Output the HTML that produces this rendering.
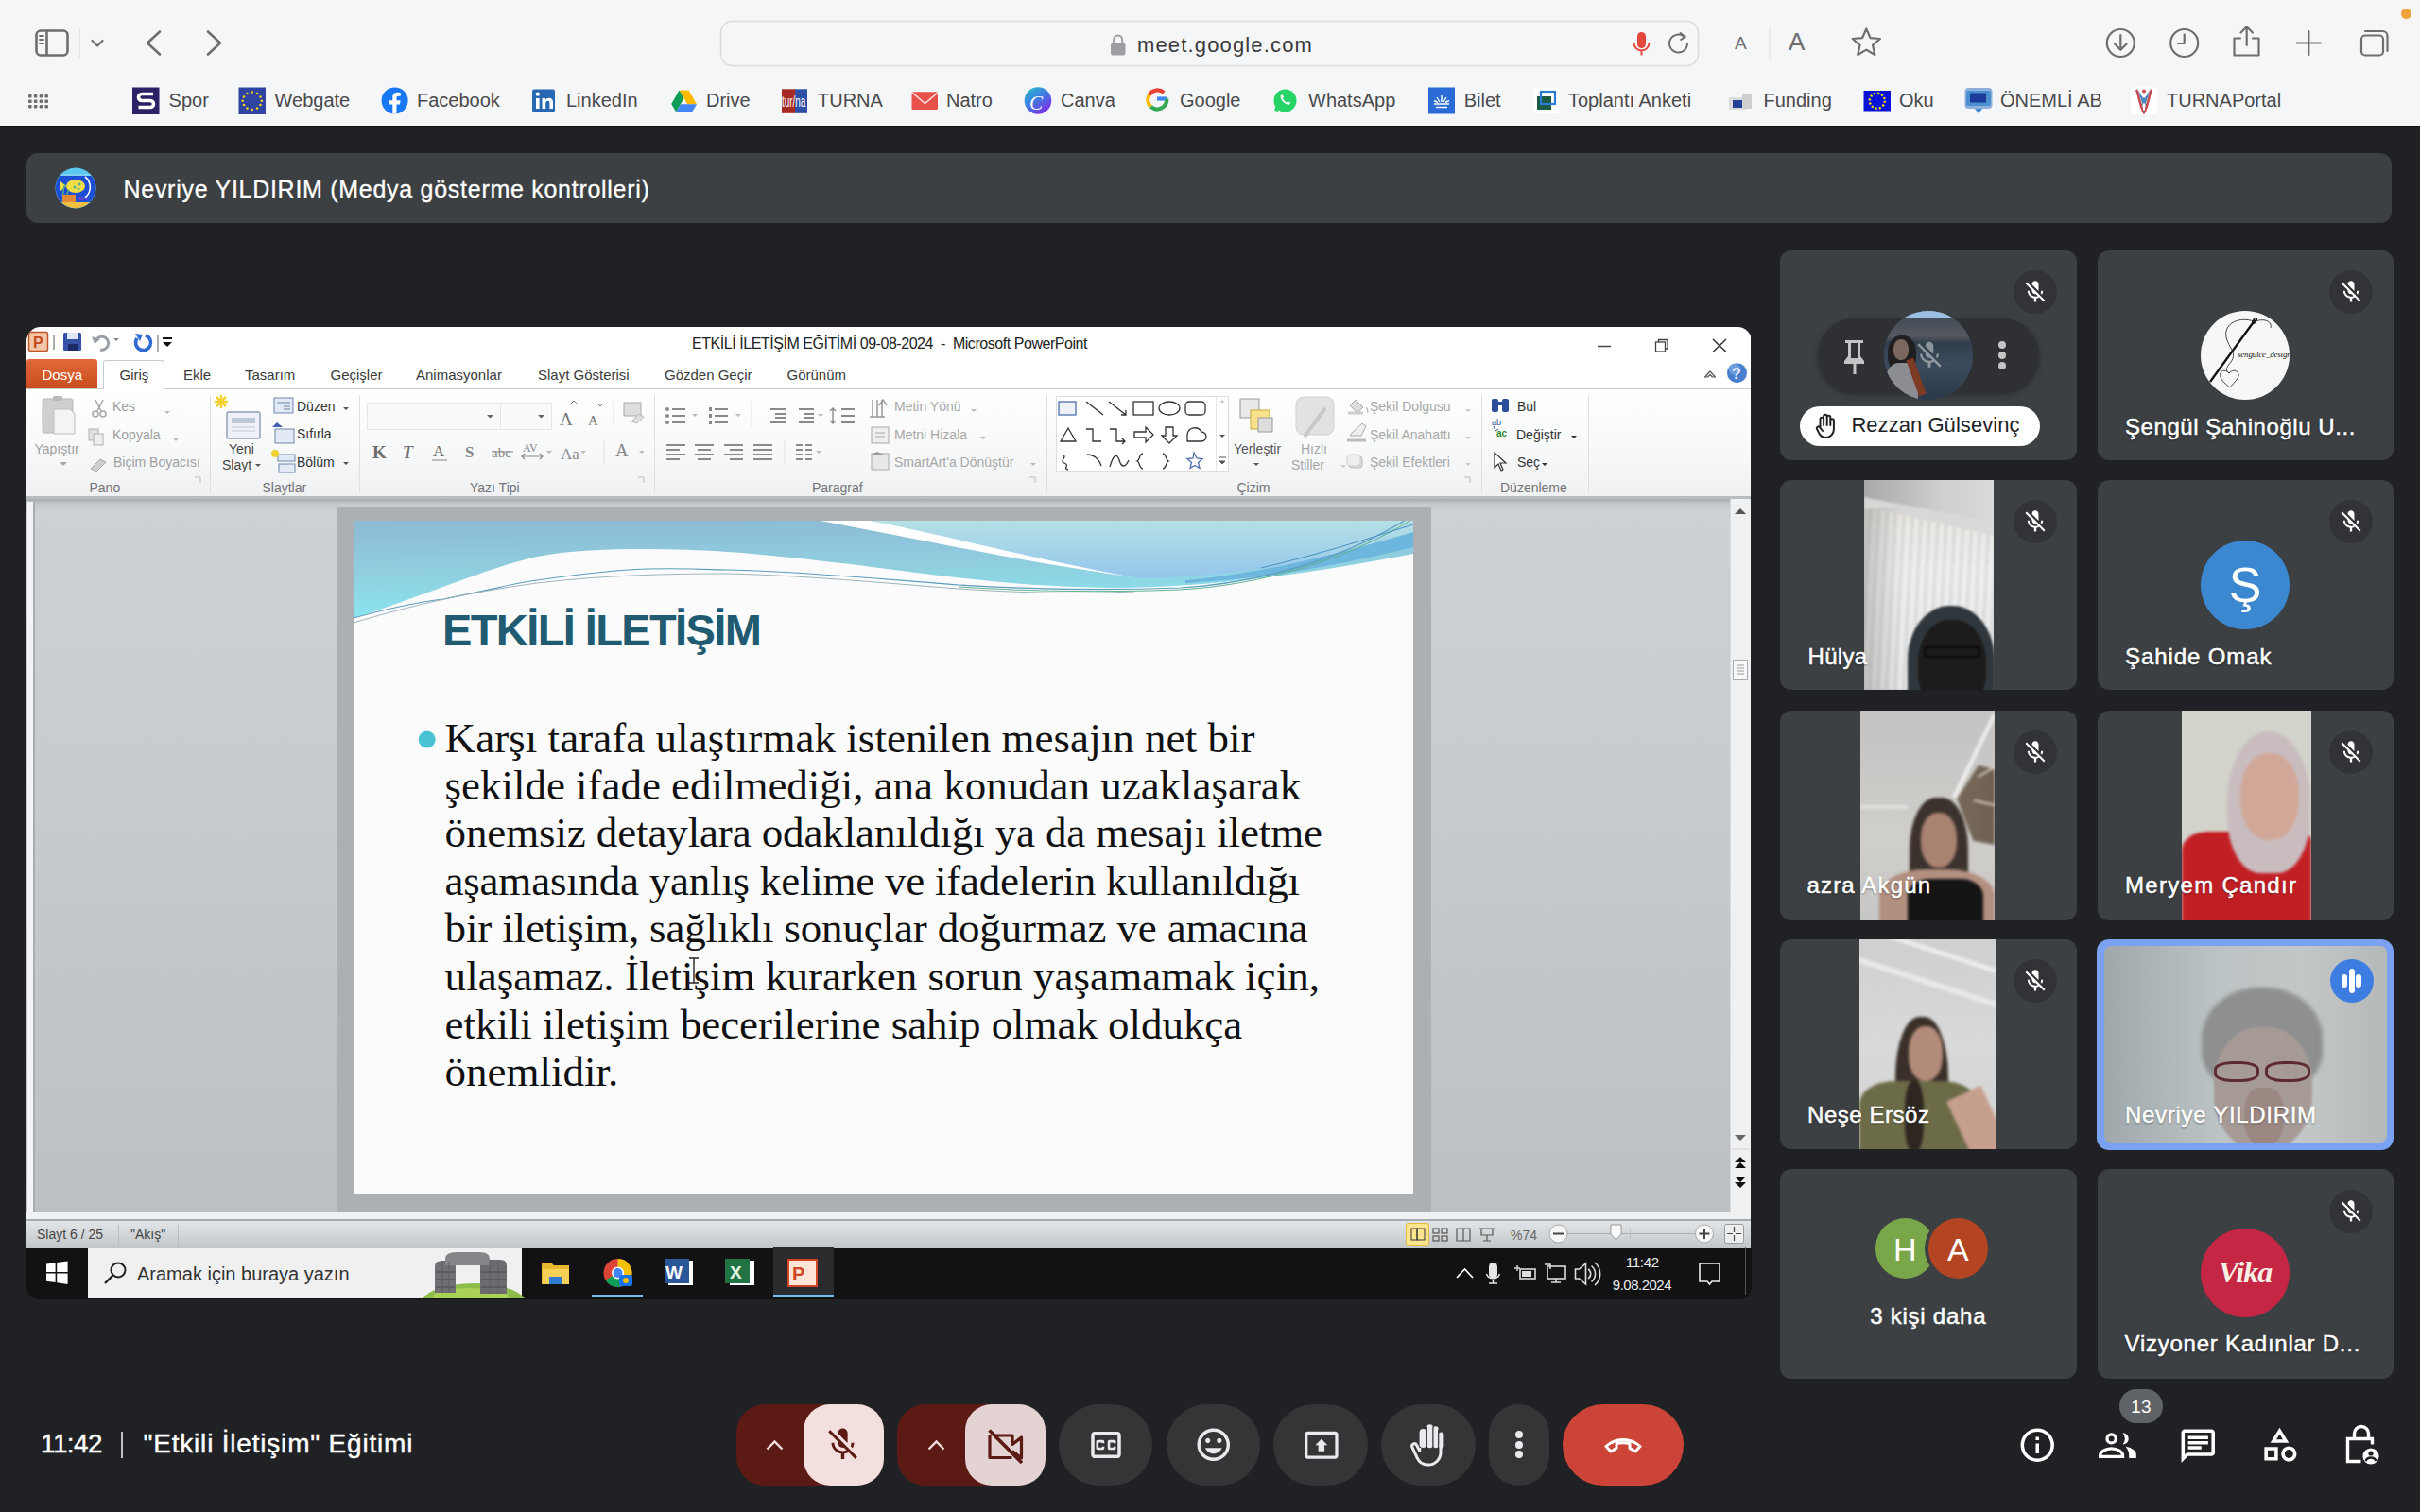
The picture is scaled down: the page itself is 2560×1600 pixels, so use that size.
<!DOCTYPE html>
<html><head><meta charset="utf-8">
<style>
*{margin:0;padding:0;box-sizing:border-box}
html,body{width:2560px;height:1600px;overflow:hidden;background:#202124;font-family:"Liberation Sans",sans-serif}
.a{position:absolute}
#tb{left:0;top:0;width:2560px;height:133px;background:#f5f6f8}
#tb .bm{position:absolute;top:90.6px;height:30px;font-size:20px;color:#4a4a4c;line-height:30px;white-space:nowrap}
#tb .bm i{position:absolute;left:0;top:1px;width:28px;height:28px;display:block}
#tb .bm span{position:absolute;top:0px}
#banner{left:28px;top:162px;width:2502px;height:74px;background:#3c4043;border-radius:12px}
#ppt{left:28px;top:346px;width:1824.5px;height:1028.5px;background:transparent;border-radius:15px 15px 14px 14px;overflow:hidden}
.tile{position:absolute;width:314px;height:222px;background:#3c4043;border-radius:12px;overflow:hidden}
.nm{position:absolute;left:28px;bottom:35px;color:#fff;font-size:23px;white-space:nowrap;text-shadow:0 1px 2px rgba(0,0,0,.6)}
.mic{position:absolute;right:30px;top:22px;width:46px;height:46px;border-radius:50%;background:#303134}
.btn{position:absolute;top:1486px;height:85px;border-radius:43px;background:#333537}
.nm2{color:#fff;white-space:nowrap;line-height:1;text-shadow:0 1px 2px rgba(0,0,0,.55);-webkit-text-stroke:.5px #fff}
</style></head><body>
<div id="tb" class="a">
<svg class="a" style="left:0;top:0" width="2560" height="133">
 <g fill="none" stroke="#6e6e70" stroke-width="2.6" stroke-linecap="round" stroke-linejoin="round">
  <rect x="38.5" y="32.5" width="33" height="26" rx="4.5"/>
  <line x1="49.5" y1="33" x2="49.5" y2="58"/>
  <line x1="42" y1="38" x2="46" y2="38" stroke-width="1.8"/><line x1="42" y1="42" x2="46" y2="42" stroke-width="1.8"/><line x1="42" y1="46" x2="46" y2="46" stroke-width="1.8"/>
  <polyline points="97.5,43 103,48.5 108.5,43" stroke-width="2.2"/>
  <polyline points="169,33.5 156,45.5 169,57.5"/>
  <polyline points="220,33.5 233,45.5 220,57.5"/>
 </g>
 <line x1="84.5" y1="31" x2="84.5" y2="61" stroke="#e2e2e4" stroke-width="1"/>
 <g fill="#6e6e70">
  <rect x="30" y="100" width="3.6" height="3.6" rx="1"/><rect x="35.8" y="100" width="3.6" height="3.6" rx="1"/><rect x="41.6" y="100" width="3.6" height="3.6" rx="1"/><rect x="47.4" y="100" width="3.6" height="3.6" rx="1"/>
  <rect x="30" y="105.5" width="3.6" height="3.6" rx="1"/><rect x="35.8" y="105.5" width="3.6" height="3.6" rx="1"/><rect x="41.6" y="105.5" width="3.6" height="3.6" rx="1"/><rect x="47.4" y="105.5" width="3.6" height="3.6" rx="1"/>
  <rect x="30" y="111" width="3.6" height="3.6" rx="1"/><rect x="35.8" y="111" width="3.6" height="3.6" rx="1"/><rect x="41.6" y="111" width="3.6" height="3.6" rx="1"/><rect x="47.4" y="111" width="3.6" height="3.6" rx="1"/>
 </g>
 <!-- url bar -->
 <rect x="762.5" y="22.5" width="1034" height="47" rx="12" fill="#f5f6f8" stroke="#dcdcde" stroke-width="1.5"/>
 <rect x="1175" y="45.5" width="15.5" height="13" rx="2.5" fill="#9d9ea2"/>
 <path d="M1178.2 45.5v-3.5a4.5 4.5 0 0 1 9 0v3.5" fill="none" stroke="#9d9ea2" stroke-width="2"/>
 <rect x="1732" y="34" width="9" height="17" rx="4.5" fill="#e5483c"/>
 <path d="M1728.5 45.5a8 8 0 0 0 16 0M1736.5 53.5v5" fill="none" stroke="#e5483c" stroke-width="2"/>
 <path d="M1785 46a9.5 9.5 0 1 1-3.2-7.1" fill="none" stroke="#6e6e70" stroke-width="2"/>
 <path d="M1777 34.5l5.5 4.4-5 3.6" fill="none" stroke="#6e6e70" stroke-width="2"/>
 <line x1="1872" y1="28" x2="1872" y2="63" stroke="#e2e2e4" stroke-width="1"/>
 <g fill="none" stroke="#6e6e70" stroke-width="2.2" stroke-linejoin="round" stroke-linecap="round">
  <path d="M1974.3 30.5l4.2 9.6 10.4 .9-7.9 6.8 2.4 10.2-9.1-5.4-9.1 5.4 2.4-10.2-7.9-6.8 10.4-.9z"/>
  <circle cx="2243.3" cy="45.5" r="14.5"/><path d="M2243.3 37v15.5M2237 46.5l6.3 6.3 6.3-6.3"/>
  <circle cx="2310.7" cy="45.5" r="14.5"/><path d="M2310.7 36.5v9.5h-6.5"/>
  <path d="M2370 40.5h-6.5v18h26v-18H2383M2376.7 48V28.5M2370.5 34.5l6.2-6.2 6.2 6.2"/>
  <path d="M2442.3 33v25M2429.8 45.5h25"/>
  <rect x="2498" y="37.5" width="23" height="21" rx="4"/><path d="M2502 33h18.5a5 5 0 0 1 5 5v16"/>
 </g>
 <circle cx="2545.5" cy="14.5" r="5.5" fill="#f0a23a"/>
 <!-- favicons -->
 <rect x="140" y="92.5" width="28.5" height="28.5" fill="#2a2166"/>
 <path d="M162 99.5h-12a3.5 3.5 0 0 0 0 7h9a3.5 3.5 0 0 1 0 7h-12.5" fill="none" stroke="#fff" stroke-width="3.6"/>
 <rect x="252.5" y="92.5" width="28.5" height="28.5" fill="#2f44a0"/>
 <g fill="#f2d21b"><circle cx="266.7" cy="97.5" r="1.3"/><circle cx="272" cy="99" r="1.3"/><circle cx="275.5" cy="102.5" r="1.3"/><circle cx="276.8" cy="106.8" r="1.3"/><circle cx="275.5" cy="111" r="1.3"/><circle cx="272" cy="114.5" r="1.3"/><circle cx="266.7" cy="116" r="1.3"/><circle cx="261.5" cy="114.5" r="1.3"/><circle cx="258" cy="111" r="1.3"/><circle cx="256.7" cy="106.8" r="1.3"/><circle cx="258" cy="102.5" r="1.3"/><circle cx="261.5" cy="99" r="1.3"/></g>
 <circle cx="417.6" cy="106.5" r="14" fill="#1877f2"/>
 <path d="M419.5 120.5v-10h3.5l.6-4.2h-4.1v-2.6c0-1.2.4-2 2.1-2h2.2v-3.7a28 28 0 0 0-3.2-.2c-3.2 0-5.3 1.9-5.3 5.5v3h-3.5v4.2h3.5v10z" fill="#fff"/>
 <rect x="563" y="94.5" width="24" height="24" rx="2" fill="#2867b2"/>
 <g fill="#fff"><rect x="567" y="104" width="3.6" height="11"/><circle cx="568.8" cy="99.6" r="2.2"/><path d="M573.5 104h3.4v1.6c.6-1 1.9-1.9 3.8-1.9 3.6 0 4.3 2.3 4.3 5.4V115h-3.6v-5.3c0-1.4 0-3-1.9-3s-2.3 1.5-2.3 3V115h-3.7z"/></g>
 <path d="M718.5 95.5h10l8.5 14.8h-10z" fill="#ffba00"/><path d="M718.5 95.5l-8.3 14.5 5 8.6 8.3-14.5z" fill="#0f9d58"/><path d="M715.2 118.6h16.9l5-8.3h-17z" fill="#4285f4"/>
 <rect x="827" y="94.3" width="14" height="25.5" fill="#a62a22"/><rect x="841" y="94.3" width="13" height="25.5" fill="#2c4ea6"/>
 <text x="827" y="113.5" font-size="16" fill="#fff" font-family="Liberation Sans" transform="translate(827 0) scale(.62 1) translate(-827 0)">tur/na</text>
 <rect x="964.5" y="97.3" width="27.5" height="18.7" rx="1.5" fill="#e8504a"/><path d="M965 98l13.5 11.5L992 98" fill="none" stroke="#fbe4e2" stroke-width="1.6"/>
 <defs><linearGradient id="cg" x1="0" y1="0" x2=".7" y2="1"><stop offset="0" stop-color="#25c2c9"/><stop offset=".5" stop-color="#3f7ee0"/><stop offset="1" stop-color="#7a2fe6"/></linearGradient></defs>
 <circle cx="1098" cy="106.5" r="14.3" fill="url(#cg)"/>
 <text x="1089" y="116" font-size="21" font-style="italic" fill="#fff" font-family="Liberation Serif">C</text>
 <g fill="none" stroke-width="4.2"><path d="M1235 104.5h-11" stroke="#4285f4"/><path d="M1234.3 104.5a10.2 10.2 0 0 1-17 8.3" stroke="#34a853"/><path d="M1217.3 112.8a10.2 10.2 0 0 1-1.5-12.5" stroke="#fbbc05"/><path d="M1215.8 100.3a10.2 10.2 0 0 1 15.5-2.3" stroke="#ea4335"/></g>
 <circle cx="1359.5" cy="106.5" r="12" fill="#25d366"/><path d="M1350 117.5l2-6" stroke="#25d366" stroke-width="4"/>
 <path d="M1354.5 101.5c0 4 4 9 9 9.5l1.8-2.2-2.8-1.6-1.3 1.2c-2-.8-3.6-2.4-4.3-4.3l1.2-1.3-1.6-2.8z" fill="#fff"/>
 <rect x="1511" y="92.5" width="28" height="28" fill="#2a6bd6"/><path d="M1517 110h16M1519 113.5h12" stroke="#fff" stroke-width="1.5"/><path d="M1525 101v7M1520 103l3 5M1530 103l-3 5M1517 106.5l4 2M1533 106.5l-4 2" stroke="#fff" stroke-width="1.4"/>
 <rect x="1622" y="93" width="27" height="27" fill="#fff"/><rect x="1626" y="102" width="15" height="14" fill="#1b5b44"/><rect x="1630" y="97" width="15" height="13" fill="none" stroke="#2a7bd6" stroke-width="2.2"/>
 <rect x="1829" y="103" width="18" height="13" fill="#dcdcdc"/><rect x="1833" y="106" width="10" height="8" fill="#233f99"/><rect x="1843" y="100" width="10" height="15" fill="#cfcfcf"/>
 <rect x="1971.5" y="96" width="28.5" height="21.5" fill="#0b12d8"/><circle cx="1985.8" cy="106.7" r="8" fill="none" stroke="#f4e000" stroke-width="2.4" stroke-dasharray="2.1 2.1"/>
 <rect x="2078.5" y="93" width="29" height="22" rx="4" fill="#8fb0dc"/><rect x="2080" y="96" width="26" height="16" rx="2" fill="#4a8fd0"/><rect x="2084" y="98.5" width="17" height="10" fill="#1b3a9a"/><path d="M2089 115l4 5 4-5z" fill="#3a8ad6"/>
 <rect x="2254" y="92.5" width="28.5" height="28.5" fill="#fff"/><path d="M2260 95c3 5 3 16 8 24c5-8 5-19 8-24" stroke="#c84a55" stroke-width="2.6" fill="none"/><path d="M2262 95c2 4 4 8 6 9c2-1 4-5 6-9c-1 6-3 10-4 14l-2 10-2-10c-1-4-3-8-4-14z" fill="#4a86c0"/><circle cx="2268" cy="96.5" r="2" fill="#c84a55"/><ellipse cx="2268" cy="113" rx="1.2" ry="4" fill="#fff"/>
</svg>
<div class="bm" style="left:178.6px">Spor</div>
<div class="bm" style="left:290.5px">Webgate</div>
<div class="bm" style="left:441px">Facebook</div>
<div class="bm" style="left:599px">LinkedIn</div>
<div class="bm" style="left:747px">Drive</div>
<div class="bm" style="left:865px">TURNA</div>
<div class="bm" style="left:1001px">Natro</div>
<div class="bm" style="left:1122px">Canva</div>
<div class="bm" style="left:1248px">Google</div>
<div class="bm" style="left:1384px">WhatsApp</div>
<div class="bm" style="left:1548.7px">Bilet</div>
<div class="bm" style="left:1659px">Toplantı Anketi</div>
<div class="bm" style="left:1865.5px">Funding</div>
<div class="bm" style="left:2009px">Oku</div>
<div class="bm" style="left:2116px">ÖNEMLİ AB</div>
<div class="bm" style="left:2292px">TURNAPortal</div>
<div class="a" style="left:1203px;top:33px;font-size:22px;color:#3a3a3c;line-height:30px;letter-spacing:1.15px">meet.google.com</div>
<div class="a" style="left:1835px;top:31px;font-size:19px;color:#6e6e70;line-height:30px">A</div>
<div class="a" style="left:1892px;top:27px;font-size:26px;color:#6e6e70;line-height:34px">A</div>
</div>
<div class="a" style="left:0;top:133px;width:2560px;height:1px;background:#111"></div>
<div id="banner" class="a"></div>
<svg class="a" style="left:58px;top:177px" width="44" height="44" viewBox="0 0 44 44">
 <defs><clipPath id="bc"><circle cx="22" cy="22" r="21.2"/></clipPath></defs>
 <circle cx="22" cy="22" r="21.5" fill="#5bc8ef"/>
 <g clip-path="url(#bc)">
  <rect x="0" y="7" width="44" height="30" fill="#1d4fd6"/>
  <rect x="0" y="7" width="44" height="2" fill="#7fd0f0"/>
  <ellipse cx="22" cy="20" rx="10" ry="7" fill="#f1de46"/>
  <path d="M12 20l-6-5v10z" fill="#f1de46"/>
  <circle cx="26" cy="18" r="1.5" fill="#58a9a0"/><circle cx="21" cy="21" r="1.5" fill="#58a9a0"/><circle cx="25" cy="23" r="1.3" fill="#58a9a0"/>
  <path d="M8 30c2-4 0-8 3-12M10 34c4-3 2-8 5-10" stroke="#4fae7e" stroke-width="1.5" fill="none"/>
  <rect x="8" y="29" width="14" height="8" fill="#e08a3a"/>
  <text x="24" y="35" font-size="6" fill="#8a3ac8" font-family="Liberation Sans" font-weight="bold">494</text>
  <rect x="0" y="37" width="44" height="7" fill="#f0c040"/>
  <path d="M32 10a14 14 0 0 1 0 22" stroke="#fff" stroke-width="1.6" fill="none"/>
 </g>
</svg>
<div class="a" style="left:130.5px;top:188px;font-size:25px;line-height:1;color:#fff;white-space:nowrap;letter-spacing:0.72px;-webkit-text-stroke:.3px #fff">Nevriye YILDIRIM (Medya gösterme kontrolleri)</div>
<div id="ppt" class="a"><div class="a" style="left:-28px;top:-346px;width:2560px;height:1600px"><div class="a" style="left:28px;top:346px;width:1824px;height:66px;background:#fff"></div><svg class="a" style="left:0;top:0" width="1900" height="420"><rect x="30.5" y="351.5" width="20" height="20" rx="2" fill="#f4c6a8" stroke="#c0552a" stroke-width="1.5"/><text x="35" y="368" font-size="16" font-weight="bold" fill="#c24a1c" font-family="Liberation Sans">P</text><line x1="57" y1="354" x2="57" y2="370" stroke="#777" stroke-width="1.2"/><rect x="67" y="352" width="19" height="19" rx="1.5" fill="#3651a8"/><rect x="71" y="352" width="11" height="7" fill="#dfe6f5"/><rect x="72" y="364" width="10" height="7" fill="#1b2a66"/><path d="M101 361a7 7 0 1 1 5 9" fill="none" stroke="#9aa0a8" stroke-width="3"/><path d="M97 356l3 8 6-5z" fill="#9aa0a8"/><path d="M120 358l3 3 3-3z" fill="#888"/><path d="M154 355a8 8 0 1 1-9 3" fill="none" stroke="#2f6bd0" stroke-width="3.6"/><path d="M143 353l8 1-3 7z" fill="#2f6bd0"/><line x1="167" y1="354" x2="167" y2="372" stroke="#777" stroke-width="1.2"/><rect x="172" y="357" width="10" height="2" fill="#111"/><path d="M172 362h10l-5 5z" fill="#111"/><line x1="1690" y1="366.5" x2="1704" y2="366.5" stroke="#444" stroke-width="1.4"/><rect x="1751.5" y="362" width="10" height="10" fill="none" stroke="#444" stroke-width="1.3"/><path d="M1754.5 362v-2.5h9.5v9.5h-2.5" fill="none" stroke="#444" stroke-width="1.3"/><path d="M1812 359l14 13.5M1826 359l-14 13.5" stroke="#333" stroke-width="1.5"/><path d="M1803.5 399l5.5-6 5.5 6h-3l-2.5-2.5-2.5 2.5z" fill="#fff" stroke="#555" stroke-width="1.2" stroke-linejoin="round"/><circle cx="1837.5" cy="394.7" r="10.5" fill="#4a7fd0"/><circle cx="1835" cy="391" r="6" fill="#6d9be0"/><text x="1832" y="401" font-size="16" font-weight="bold" fill="#e8f0ff" font-family="Liberation Sans">?</text></svg><div class="a" style="left:732px;top:356.3px;font-size:16px;line-height:1;color:#222;white-space:nowrap;letter-spacing:-0.45px">ETKİLİ İLETİŞİM EĞİTİMİ 09-08-2024&nbsp; - &nbsp;Microsoft PowerPoint</div>
<div class="a" style="left:28px;top:380px;width:75px;height:31px;background:linear-gradient(#e2683a,#c94c1e);border-radius:3px 3px 0 0"></div><div class="a" style="left:44.5px;top:389.3px;font-size:15px;line-height:1;color:#fff;white-space:nowrap;">Dosya</div>
<div class="a" style="left:109px;top:381px;width:65px;height:32px;background:#fff;border:1px solid #c8ccd0;border-bottom:none;border-radius:3px 3px 0 0"></div><div class="a" style="left:28px;top:411px;width:81px;height:1.5px;background:#c8ccd0"></div><div class="a" style="left:174px;top:411px;width:1678px;height:1.5px;background:#c8ccd0"></div><div class="a" style="left:126.5px;top:389.3px;font-size:15px;line-height:1;color:#3b3b3b;white-space:nowrap;">Giriş</div>
<div class="a" style="left:194px;top:389.3px;font-size:15px;line-height:1;color:#3b3b3b;white-space:nowrap;">Ekle</div>
<div class="a" style="left:259px;top:389.3px;font-size:15px;line-height:1;color:#3b3b3b;white-space:nowrap;">Tasarım</div>
<div class="a" style="left:349.5px;top:389.3px;font-size:15px;line-height:1;color:#3b3b3b;white-space:nowrap;">Geçişler</div>
<div class="a" style="left:440px;top:389.3px;font-size:15px;line-height:1;color:#3b3b3b;white-space:nowrap;">Animasyonlar</div>
<div class="a" style="left:569px;top:389.3px;font-size:15px;line-height:1;color:#3b3b3b;white-space:nowrap;">Slayt Gösterisi</div>
<div class="a" style="left:703px;top:389.3px;font-size:15px;line-height:1;color:#3b3b3b;white-space:nowrap;">Gözden Geçir</div>
<div class="a" style="left:832.5px;top:389.3px;font-size:15px;line-height:1;color:#3b3b3b;white-space:nowrap;">Görünüm</div>
<div class="a" style="left:28px;top:412px;width:1824px;height:115px;background:linear-gradient(#ffffff,#f7f8f9 60%,#eef0f2)"></div><div class="a" style="left:28px;top:525px;width:1824px;height:3px;background:#b9bdc1"></div><div class="a" style="left:221.5px;top:418px;width:1px;height:104px;background:#dde0e3"></div><div class="a" style="left:380px;top:418px;width:1px;height:104px;background:#dde0e3"></div><div class="a" style="left:692px;top:418px;width:1px;height:104px;background:#dde0e3"></div><div class="a" style="left:1107px;top:418px;width:1px;height:104px;background:#dde0e3"></div><div class="a" style="left:1566.5px;top:418px;width:1px;height:104px;background:#dde0e3"></div><div class="a" style="left:1680px;top:418px;width:1px;height:104px;background:#dde0e3"></div><div class="a" style="left:94.5px;top:508.6px;font-size:14px;line-height:1;color:#747478;white-space:nowrap;">Pano</div>
<div class="a" style="left:277.5px;top:508.6px;font-size:14px;line-height:1;color:#747478;white-space:nowrap;">Slaytlar</div>
<div class="a" style="left:497px;top:508.6px;font-size:14px;line-height:1;color:#747478;white-space:nowrap;">Yazı Tipi</div>
<div class="a" style="left:859px;top:508.6px;font-size:14px;line-height:1;color:#747478;white-space:nowrap;">Paragraf</div>
<div class="a" style="left:1308.5px;top:508.6px;font-size:14px;line-height:1;color:#747478;white-space:nowrap;">Çizim</div>
<div class="a" style="left:1587px;top:508.6px;font-size:14px;line-height:1;color:#747478;white-space:nowrap;">Düzenleme</div>
<svg class="a" style="left:0;top:0" width="1900" height="530"><rect x="45" y="422" width="32" height="36" rx="2" fill="#cfcfcf" stroke="#b5b5b5"/><rect x="56" y="419" width="10" height="5" rx="1" fill="#bbb"/><path d="M57 433h17l5 5v21H57z" fill="#f4f4f4" stroke="#bdbdbd"/><path d="M63 489l4 4 4-4z" fill="#aaa"/><g stroke="#a9a9a9" stroke-width="1.6" fill="none"><circle cx="101" cy="438" r="3"/><circle cx="109" cy="438" r="3"/><path d="M103 435l6-12M107 435l-6-12"/></g><rect x="94" y="454" width="10" height="12" fill="#e0e0e0" stroke="#b3b3b3"/><rect x="99" y="459" width="10" height="12" fill="#eee" stroke="#b3b3b3"/><path d="M96 496l10-10 6 3-10 10z" fill="#cfcfcf" stroke="#aaa"/><path d="M183 464l3 3 3-3z" fill="#bbb"/><path d="M206 505h6v6" fill="none" stroke="#bbb"/><rect x="240" y="436" width="35" height="28" rx="2" fill="#eef2f8" stroke="#8ea0b8" stroke-width="1.5"/><rect x="245" y="442" width="25" height="6" fill="#bfc8d6"/><path d="M245 452h25M245 456h25" stroke="#bfc8d6"/><path d="M229 420l10 10M239 420l-10 10M234 418v14M227 425h14" stroke="#f2d230" stroke-width="2.5"/><path d="M270 491l3 3 3-3z" fill="#555"/><rect x="290" y="421" width="20" height="16" fill="#e3eaf5" stroke="#6e86ad"/><path d="M293 426h14M300 430h7M300 433h7" stroke="#6e86ad"/><rect x="291" y="454" width="20" height="15" fill="#e3eaf5" stroke="#6e86ad"/><path d="M288 452l5-5 6 5" fill="#3d5fae"/><rect x="294" y="481" width="18" height="7" fill="#e3eaf5" stroke="#6e86ad"/><rect x="295" y="491" width="17" height="9" fill="#e3eaf5" stroke="#6e86ad"/><circle cx="291" cy="480" r="4" fill="#f2d230"/><path d="M363 431l3 3 3-3zM363 489l3 3 3-3z" fill="#555"/><rect x="388.5" y="426.5" width="141" height="28" fill="#fafafa" stroke="#e4e6e8"/><rect x="529.5" y="426.5" width="54" height="28" fill="#fafafa" stroke="#e4e6e8"/><path d="M515 439l3.5 3.5 3.5-3.5zM569 439l3.5 3.5 3.5-3.5z" fill="#666"/><text x="592" y="450" font-size="19" fill="#777" font-family="Liberation Serif">A</text><path d="M604 427l3-3 3 3" fill="none" stroke="#777"/><text x="622" y="450" font-size="15" fill="#777" font-family="Liberation Serif">A</text><path d="M632 427l3 3 3-3" fill="none" stroke="#777"/><line x1="649" y1="424" x2="649" y2="452" stroke="#e0e0e0"/><rect x="660" y="426" width="18" height="14" fill="#ddd" stroke="#aaa"/><path d="M668 446l8-8 5 3-7 7z" fill="#ddd" stroke="#bbb"/><g font-family="Liberation Serif" fill="#6d6d6d"><text x="394" y="485" font-size="19" font-weight="bold">K</text><text x="426" y="485" font-size="19" font-style="italic">T</text><text x="458" y="483" font-size="17">A</text><text x="492" y="484" font-size="17" font-weight="bold" fill="#888">S</text><text x="520" y="484" font-size="15" fill="#888">abc</text><text x="553" y="478" font-size="12" fill="#888">AV</text><text x="593" y="486" font-size="17" fill="#888">Aa</text><text x="651" y="483" font-size="19" fill="#888">A</text></g><path d="M457 487h16M520 478h23M553 483h20M555 480l-3 3 3 3M571 480l3 3-3 3" stroke="#888" fill="none" stroke-width="1.2"/><path d="M578 477l3 3 3-3zM614 477l3 3 3-3zM676 477l3 3 3-3z" fill="#bbb"/><line x1="639" y1="466" x2="639" y2="492" stroke="#e0e0e0"/><path d="M675 505h6v6" fill="none" stroke="#bbb"/><g stroke="#8a8a8a" stroke-width="2"><path d="M711 433h14M711 440h14M711 447h14" /><path d="M756 433h14M756 440h14M756 447h14"/><path d="M815 433h16M820 438h11M820 442h11M815 447h16M845 433h16M850 438h11M850 442h11M845 447h16"/><path d="M890 433h14M890 440h14M890 447h14"/><path d="M705 471h20M705 476h14M705 481h20M705 486h14M735 471h20M738 476h14M735 481h20M738 486h14M766 471h20M772 476h14M766 481h20M772 486h14M797 471h20M797 476h20M797 481h20M797 486h20M842 471h7M842 476h7M842 481h7M842 486h7M852 471h7M852 476h7M852 481h7M852 486h7"/></g><g fill="#8a8a8a"><circle cx="706" cy="433" r="2"/><circle cx="706" cy="440" r="2"/><circle cx="706" cy="447" r="2"/><rect x="750" y="431" width="3" height="4"/><rect x="750" y="438" width="3" height="4"/><rect x="750" y="445" width="3" height="4"/></g><path d="M732 438l3 3 3-3zM778 438l3 3 3-3zM865 438l3 3 3-3zM863 477l3 3 3-3z" fill="#bbb"/><path d="M881 432v16M878 435l3-3 3 3M878 445l3 3 3-3" stroke="#8a8a8a" fill="none" stroke-width="1.4"/><line x1="795" y1="424" x2="795" y2="452" stroke="#e0e0e0"/><line x1="830" y1="466" x2="830" y2="492" stroke="#e0e0e0"/><path d="M923 423v18M928 423v18M933 423v18M920 441h16M938 429l-4-6-4 6" stroke="#999" fill="none" stroke-width="1.5"/><rect x="922" y="452" width="18" height="17" fill="#eee" stroke="#aaa"/><path d="M926 458h10M926 462h10" stroke="#aaa"/><rect x="922" y="480" width="18" height="17" fill="#e8e8e8" stroke="#aaa"/><path d="M921 481l7-3 7 3" fill="#999"/><path d="M1027 433l3 3 3-3zM1037 462l3 3 3-3zM1090 490l3 3 3-3z" fill="#bbb"/><path d="M1089 505h6v6" fill="none" stroke="#bbb"/><rect x="1117.5" y="419.5" width="182" height="79" fill="#fff" stroke="#dcdfe2"/><line x1="1286.5" y1="420" x2="1286.5" y2="498" stroke="#e4e6e8"/><path d="M1290 426l3-3 3 3z" fill="#ccc"/><path d="M1290 460l3 3 3-3z" fill="#555"/><path d="M1289 484h8M1290 488l3 3 3-3z" stroke="#555" fill="#555"/><g fill="none" stroke="#333" stroke-width="1.3"><rect x="1120" y="425" width="18" height="14" fill="#eef2f8" stroke="#4d6fa9"/><path d="M1149 425l18 14"/><path d="M1173 425l18 14M1186 439h5v-5"/><rect x="1199" y="425" width="21" height="14"/><ellipse cx="1237" cy="432" rx="11" ry="7"/><rect x="1254" y="425" width="21" height="14" rx="4"/><path d="M1122 467l8-14 8 14z"/><path d="M1149 454h7v13h9"/><path d="M1174 454h7v13h9M1187 464l3 3-3 3"/><path d="M1200 457h12v-5l8 8-8 8v-5h-12z"/><path d="M1233 452v9h-4l8 8 8-8h-4v-9z"/><path d="M1256 467h15a5 5 0 0 0 0-10 8 8 0 0 0-15 3z"/><path d="M1124 481c6 2-4 7 2 9s-2 6 4 7"/><path d="M1150 481c8 0 13 6 15 12"/><path d="M1174 494c4-14 8-14 10-7s6 9 10 0"/><path d="M1209 480c-4 0-3 7-6 8 3 1 2 8 6 8"/><path d="M1230 480c4 0 3 7 6 8-3 1-2 8-6 8"/><path d="M1263 479l3 6 6 .5-4.5 4 1.5 6-5-3-5 3 1.5-6-4.5-4 6-.5z" stroke="#4d6fa9"/></g><rect x="1312" y="422" width="20" height="20" fill="#e8e8e8" stroke="#999"/><rect x="1323" y="434" width="20" height="20" fill="#f7e18a" stroke="#c9a93a"/><rect x="1331" y="442" width="15" height="15" fill="#ddd" stroke="#999"/><text x="1305" y="480" font-size="14" fill="#555" font-family="Liberation Sans">Yerleştir</text><path d="M1326 490l3 3 3-3z" fill="#555"/><rect x="1371" y="420" width="40" height="40" rx="8" fill="#e2e2e2" stroke="#d0d0d0"/><path d="M1380 462l22-30" stroke="#c8c8c8" stroke-width="4"/><path d="M1418 492l3 3 3-3z" fill="#ccc"/><path d="M1434 423l8 8-6 6-8-8zM1445 431c2 3 3 5 1 6" fill="#ddd" stroke="#aaa"/><path d="M1426 437h16" stroke="#ccc" stroke-width="3"/><path d="M1428 461h12l5-10-4-3-10 9z" fill="#eee" stroke="#aaa"/><path d="M1425 466h20" stroke="#bbb" stroke-width="3"/><rect x="1427" y="483" width="14" height="12" rx="3" fill="#ddd" stroke="#bbb"/><rect x="1425" y="481" width="14" height="12" rx="3" fill="#eee" stroke="#ccc"/><path d="M1550 433l3 3 3-3zM1550 462l3 3 3-3zM1550 490l3 3 3-3z" fill="#ccc"/><path d="M1549 505h6v6" fill="none" stroke="#bbb"/><g fill="#2a4e99"><rect x="1578" y="422" width="7" height="14" rx="2"/><rect x="1589" y="422" width="7" height="14" rx="2"/><rect x="1583" y="425" width="8" height="4"/></g><text x="1578" y="450" font-size="9" fill="#2a4e99" font-family="Liberation Sans">ab</text><text x="1583" y="462" font-size="10" fill="#2e8a2e" font-family="Liberation Sans" font-weight="bold">ac</text><path d="M1580 451l2 5 3-2" fill="none" stroke="#2a4e99"/><path d="M1581 479l0 16 4-4 3 7 2-1-3-7h6z" fill="#fff" stroke="#333" stroke-width="1.2"/><path d="M1662 461l3 3 3-3zM1631 490l3 3 3-3z" fill="#333"/></svg><div class="a" style="left:119px;top:423.1px;font-size:14px;line-height:1;color:#a0a0a0;white-space:nowrap;">Kes</div>
<div class="a" style="left:119px;top:452.8px;font-size:14px;line-height:1;color:#a0a0a0;white-space:nowrap;">Kopyala</div>
<div class="a" style="left:120px;top:481.7px;font-size:14px;line-height:1;color:#a0a0a0;white-space:nowrap;">Biçim Boyacısı</div>
<div class="a" style="left:36.5px;top:468.1px;font-size:14px;line-height:1;color:#a0a0a0;white-space:nowrap;">Yapıştır</div>
<div class="a" style="left:242px;top:467.7px;font-size:14px;line-height:1;color:#444;white-space:nowrap;">Yeni</div>
<div class="a" style="left:235px;top:485.1px;font-size:14px;line-height:1;color:#444;white-space:nowrap;">Slayt</div>
<div class="a" style="left:314px;top:423.1px;font-size:14px;line-height:1;color:#333;white-space:nowrap;">Düzen</div>
<div class="a" style="left:314px;top:452.1px;font-size:14px;line-height:1;color:#333;white-space:nowrap;">Sıfırla</div>
<div class="a" style="left:314px;top:481.7px;font-size:14px;line-height:1;color:#333;white-space:nowrap;">Bölüm</div>
<div class="a" style="left:946px;top:423.1px;font-size:14px;line-height:1;color:#a8a8a8;white-space:nowrap;">Metin Yönü</div>
<div class="a" style="left:946px;top:452.8px;font-size:14px;line-height:1;color:#a8a8a8;white-space:nowrap;">Metni Hizala</div>
<div class="a" style="left:946px;top:482.1px;font-size:14px;line-height:1;color:#a8a8a8;white-space:nowrap;">SmartArt'a Dönüştür</div>
<div class="a" style="left:1376px;top:467.8px;font-size:14px;line-height:1;color:#a8a8a8;white-space:nowrap;">Hızlı</div>
<div class="a" style="left:1366px;top:485.1px;font-size:14px;line-height:1;color:#a8a8a8;white-space:nowrap;">Stiller</div>
<div class="a" style="left:1449px;top:423.1px;font-size:14px;line-height:1;color:#a8a8a8;white-space:nowrap;">Şekil Dolgusu</div>
<div class="a" style="left:1449px;top:452.8px;font-size:14px;line-height:1;color:#a8a8a8;white-space:nowrap;">Şekil Anahattı</div>
<div class="a" style="left:1449px;top:482.1px;font-size:14px;line-height:1;color:#a8a8a8;white-space:nowrap;">Şekil Efektleri</div>
<div class="a" style="left:1605px;top:423.1px;font-size:14px;line-height:1;color:#333;white-space:nowrap;">Bul</div>
<div class="a" style="left:1604px;top:452.8px;font-size:14px;line-height:1;color:#333;white-space:nowrap;">Değiştir</div>
<div class="a" style="left:1605px;top:482.1px;font-size:14px;line-height:1;color:#333;white-space:nowrap;">Seç</div>
<div class="a" style="left:173px;top:428px;"><svg width="10" height="10"><path d="M1 3l3 3 3-3z" fill="#bbb"/></svg></div><div class="a" style="left:28px;top:528px;width:1824px;height:763px;background:#f3f5f6"></div><div class="a" style="left:28px;top:528px;width:1803px;height:755px;background:linear-gradient(180deg,#a3a8ab 0,#c3c8ca 5px,#cdd1d3 12px,#c6cacc 50%,#bcc0c2)"></div><div class="a" style="left:29px;top:531px;width:6px;height:752px;background:#f2f4f5"></div><div class="a" style="left:35px;top:531px;width:1.5px;height:752px;background:#a9adb0"></div><div class="a" style="left:355.5px;top:537px;width:1158px;height:746px;background:#adb0b3"></div><div class="a" style="left:1830px;top:528px;width:22px;height:763px;background:#eef0f2;border-left:1px solid #d8dbde"></div><svg class="a" style="left:1830px;top:528px" width="22" height="763"><path d="M5 16l6-6 6 6z" fill="#555"/><rect x="3.5" y="170.5" width="15" height="21" fill="#f8f8f8" stroke="#a9adb1"/><path d="M7 176h8M7 179h8M7 182h8M7 185h8" stroke="#999"/><path d="M5 673l6 6 6-6z" fill="#666"/><line x1="1" y1="688" x2="21" y2="688" stroke="#d0d4d8"/><path d="M5 702l6-6 6 6zM5 708l6-6 6 6zM5 717l6 6 6-6zM5 723l6 6 6-6z" fill="#111"/></svg><div id="slide" class="a" style="left:374px;top:551px;width:1121px;height:713px;background:#fbfbfc;overflow:hidden"><svg class="a" style="left:0;top:0" width="1121" height="713">
<defs>
 <linearGradient id="gl" x1="0" y1="0" x2="0.15" y2="1"><stop offset="0" stop-color="#8dbad5"/><stop offset=".55" stop-color="#8fcfe0"/><stop offset="1" stop-color="#8ae6f0"/></linearGradient>
 <linearGradient id="gr" x1="0" y1="0" x2="0" y2="1"><stop offset="0" stop-color="#b5e0e6"/><stop offset="1" stop-color="#95c6ec"/></linearGradient>
</defs>
<rect width="1121" height="713" fill="#fbfbfc"/>
<path d="M0 0H1121V35C1000 58 900 71 800 71C700 70 620 58 526 46C470 40 400 30 310 30C270 30 230 31 194 38C140 50 60 85 0 103Z" fill="url(#gl)"/>
<path d="M546 0H1121V22C1000 48 900 62 825 60C700 38 620 16 546 0Z" fill="url(#gr)"/>
<path d="M494 0C600 20 700 42 825 60C700 36 620 14 546 0Z" fill="#fff"/>
<path d="M880 63C960 56 1040 36 1121 12V28C1040 48 960 62 880 66Z" fill="#6db6dd"/>
<path d="M0 103C40 92 70 86 95 83C150 72 170 66 194 63C250 55 280 52 310 51C360 50 380 52 396 52C480 54 560 62 640 68C720 73 790 74 875 71C960 66 1050 40 1121 -6" fill="none" stroke="#5c9cbc" stroke-width="1.2"/>
<path d="M0 108C60 90 120 76 194 66C260 58 330 56 396 56C480 58 560 66 640 72C700 76 760 78 826 75" fill="none" stroke="#9fb4bc" stroke-width="1"/>
<path d="M640 70C720 75 790 76 875 73C960 68 1050 42 1121 -2" fill="none" stroke="#5eb28e" stroke-width="1"/>
<path d="M960 50C1020 36 1070 20 1121 4" fill="none" stroke="#4a8fc0" stroke-width="1"/>
<circle cx="77.7" cy="231.6" r="9" fill="#4bc2d4"/>
<path d="M355 463h10M360 463v26M355 489h10" stroke="#222" stroke-width="1.4"/>
</svg>
<div class="a" style="left:94px;top:92px;font-size:47px;font-weight:bold;color:#215b71;letter-spacing:-1.6px;white-space:nowrap;line-height:1">ETKİLİ İLETİŞİM</div>
<div class="a" style="left:96.6px;top:208.3px;font-family:'Liberation Serif',serif;font-size:45px;line-height:1;color:#111;white-space:nowrap;letter-spacing:0.047px">Karşı tarafa ulaştırmak istenilen mesajın net bir</div>
<div class="a" style="left:96.6px;top:257.8px;font-family:'Liberation Serif',serif;font-size:45px;line-height:1;color:#111;white-space:nowrap;letter-spacing:-0.03px">şekilde ifade edilmediği, ana konudan uzaklaşarak</div>
<div class="a" style="left:96.6px;top:308.3px;font-family:'Liberation Serif',serif;font-size:45px;line-height:1;color:#111;white-space:nowrap;letter-spacing:-0.125px">önemsiz detaylara odaklanıldığı ya da mesajı iletme</div>
<div class="a" style="left:96.6px;top:358.8px;font-family:'Liberation Serif',serif;font-size:45px;line-height:1;color:#111;white-space:nowrap;letter-spacing:-0.23px">aşamasında yanlış kelime ve ifadelerin kullanıldığı</div>
<div class="a" style="left:96.6px;top:409.3px;font-family:'Liberation Serif',serif;font-size:45px;line-height:1;color:#111;white-space:nowrap;letter-spacing:-0.16px">bir iletişim, sağlıklı sonuçlar doğurmaz ve amacına</div>
<div class="a" style="left:96.6px;top:460.3px;font-family:'Liberation Serif',serif;font-size:45px;line-height:1;color:#111;white-space:nowrap;letter-spacing:0.04px">ulaşamaz. İletişim kurarken sorun yaşamamak için,</div>
<div class="a" style="left:96.6px;top:510.8px;font-family:'Liberation Serif',serif;font-size:45px;line-height:1;color:#111;white-space:nowrap;letter-spacing:-0.05px">etkili iletişim becerilerine sahip olmak oldukça</div>
<div class="a" style="left:96.6px;top:561.3px;font-family:'Liberation Serif',serif;font-size:45px;line-height:1;color:#111;white-space:nowrap;letter-spacing:0px">önemlidir.</div>
</div><div class="a" style="left:28px;top:1283px;width:1824px;height:8px;background:#eff1f3"></div><div class="a" style="left:28px;top:1290px;width:1824px;height:2px;background:#a7abaf"></div><div class="a" style="left:28px;top:1292px;width:1824px;height:28.5px;background:linear-gradient(#e2e5e8,#d3d6d9 50%,#c1c5c7)"></div><div class="a" style="left:39px;top:1298.6px;font-size:14px;line-height:1;color:#444;white-space:nowrap;">Slayt 6 / 25</div>
<div class="a" style="left:138px;top:1298.6px;font-size:14px;line-height:1;color:#444;white-space:nowrap;">"Akış"</div>
<div class="a" style="left:125px;top:1296px;width:1px;height:22px;background:#b8bcc0"></div><div class="a" style="left:188px;top:1296px;width:1px;height:22px;background:#b8bcc0"></div><svg class="a" style="left:1470px;top:1292px" width="382" height="29"><rect x="17.5" y="2.5" width="24" height="23" rx="2" fill="#fde58f" stroke="#e4b93e"/><rect x="23" y="8" width="6" height="12" fill="none" stroke="#333"/><rect x="29" y="8" width="8" height="12" fill="none" stroke="#333"/><g fill="none" stroke="#555" stroke-width="1.2"><rect x="46" y="8" width="6" height="5"/><rect x="55" y="8" width="6" height="5"/><rect x="46" y="16" width="6" height="5"/><rect x="55" y="16" width="6" height="5"/><path d="M71 8h7v13h-7zM78 8h7v13h-7"/><path d="M95 8h16M97 8v7h12V8M103 15v6M99 21h8"/></g><text x="128" y="20" font-size="14" fill="#666" font-family="Liberation Sans">%74</text><circle cx="178.5" cy="13.5" r="9.5" fill="#f6f6f6" stroke="#aaa"/><path d="M173 13.5h11" stroke="#444" stroke-width="2"/><line x1="188" y1="13.5" x2="323" y2="13.5" stroke="#aaa"/><path d="M234 4h11v10l-5.5 6-5.5-6z" fill="#fafafa" stroke="#999"/><line x1="254.5" y1="9" x2="254.5" y2="19" stroke="#bbb"/><circle cx="333" cy="13.5" r="9.5" fill="#f6f6f6" stroke="#aaa"/><path d="M327.5 13.5h11M333 8v11" stroke="#444" stroke-width="2"/><rect x="354.5" y="3.5" width="20" height="20" rx="2" fill="#eee" stroke="#999"/><path d="M364.5 6v6M364.5 15v6M357 13.5h6M366 13.5h6" stroke="#444" stroke-width="1.2"/></svg><div class="a" style="left:28px;top:1320.5px;width:1825px;height:55px;background:#121212"></div><div class="a" style="left:92.5px;top:1320.5px;width:459px;height:53px;background:#f0f0f0"></div><svg class="a" style="left:28px;top:1320px" width="1824" height="54"><g fill="#fff"><path d="M21 17.6l9.6-1.3v9.6H21zM32.2 16.1L43.6 14.5v11.4H32.2zM21 27.5h9.6v9.6L21 35.8zM32.2 27.5h11.4v11.4l-11.4-1.6z"/></g><circle cx="97" cy="24" r="7.5" fill="none" stroke="#222" stroke-width="2"/><path d="M91.5 29.5l-8.5 8.5" stroke="#222" stroke-width="2.4"/><ellipse cx="473" cy="60" rx="56" ry="22" fill="#8dbd48"/><ellipse cx="470" cy="52" rx="40" ry="9" fill="#a9d257"/><path d="M432 20q0-6 8-6h8q6 0 6 6v28h-22z" fill="#707074"/><path d="M480 18q0-5 7-5h14q7 0 7 6v30h-28z" fill="#6c6c70"/><path d="M443 12q0-7 12-7h24q11 0 11 7v7h-47z" fill="#86868a"/><path d="M433 26h20M433 34h20M433 42h20M481 26h26M481 34h26M481 42h26" stroke="#56565a" stroke-width="1.6"/><path d="M440 15v33M447 15v33M490 14v34M499 14v34" stroke="#5f5f63" stroke-width="1"/><path d="M545 16h10l3 3h16v20h-29z" fill="#e8b730"/><rect x="546" y="23" width="28" height="16" fill="#f6d155"/><rect x="553" y="31" width="13" height="8" fill="#2f7bd2"/><circle cx="625.5" cy="27" r="15" fill="#db4437"/><path d="M625.5 27 L612.5 34.5 A15 15 0 0 0 638.5 34.5z" fill="#0f9d58"/><path d="M625.5 27 L638.5 34.5 A15 15 0 0 0 625.5 12z" fill="#f4c20d"/><circle cx="625.5" cy="27" r="6.5" fill="#fff"/><circle cx="625.5" cy="27" r="5" fill="#4285f4"/><rect x="627" y="29" width="14" height="12" rx="2" fill="#1a73e8"/><circle cx="634" cy="35" r="3" fill="#fbbc04"/><rect x="598" y="50" width="54" height="3" fill="#76b9ed"/><rect x="679" y="14" width="26" height="26" fill="#fff"/><rect x="675" y="12" width="26" height="26" fill="#2b579a"/><text x="676" y="33" font-size="19" font-weight="bold" fill="#fff" font-family="Liberation Sans">W</text><rect x="744" y="14" width="26" height="26" fill="#fff"/><rect x="739" y="12" width="26" height="26" fill="#217346"/><text x="744" y="33" font-size="19" font-weight="bold" fill="#e8f5e0" font-family="Liberation Sans">X</text><rect x="790" y="0" width="64" height="53" fill="#2a2b2c"/><rect x="790" y="50" width="64" height="3" fill="#76b9ed"/><rect x="806" y="13" width="30" height="28" fill="#fce4d6"/><rect x="806" y="13" width="30" height="28" fill="none" stroke="#d04525" stroke-width="2"/><text x="810" y="35" font-size="20" font-weight="bold" fill="#d04525" font-family="Liberation Sans">P</text><path d="M1513 32l8.5-9 8.5 9" fill="none" stroke="#fff" stroke-width="1.8"/><rect x="1547" y="16" width="9" height="17" rx="4.5" fill="#e6e6e6"/><path d="M1544.5 28a7.5 7.5 0 0 0 14 0M1551.5 35v3M1547 38h9" fill="none" stroke="#e6e6e6" stroke-width="1.6"/><rect x="1580" y="23" width="16" height="10" fill="none" stroke="#ddd" stroke-width="1.6"/><rect x="1582" y="25" width="10" height="6" fill="#ddd"/><path d="M1574 22h6M1577 19v6" stroke="#ddd" stroke-width="1.4"/><rect x="1609" y="20" width="19" height="13" fill="none" stroke="#ddd" stroke-width="1.6"/><path d="M1618 33v4M1613 37h10M1606 18h6v5" stroke="#ddd" stroke-width="1.6" fill="none"/><path d="M1638.5 23h4l7-6v22l-7-6h-4z" fill="none" stroke="#ddd" stroke-width="1.6"/><path d="M1652 23a6 6 0 0 1 0 10M1655.5 19.5a11 11 0 0 1 0 17M1659 16a15.5 15.5 0 0 1 0 24" fill="none" stroke="#ddd" stroke-width="1.6"/><path d="M1770 17h21v19h-8l-2.5 3-2.5-3h-8z" fill="none" stroke="#eee" stroke-width="1.6"/><line x1="1818.5" y1="0" x2="1818.5" y2="50" stroke="#555"/></svg><div class="a" style="left:145px;top:1338.1px;font-size:20px;line-height:1;color:#333;white-space:nowrap;">Aramak için buraya yazın</div>
<div class="a" style="left:1719.8px;top:1327.6px;font-size:15px;line-height:1;color:#eee;white-space:nowrap;letter-spacing:-0.3px">11:42</div>
<div class="a" style="left:1705.8px;top:1351.9px;font-size:15px;line-height:1;color:#eee;white-space:nowrap;letter-spacing:-0.5px">9.08.2024</div>
</div></div><div class="a" style="left:1882.5px;top:265px;width:314.5px;height:222px;background:#3c4043;border-radius:12px;overflow:hidden;"><div class="a" style="left:-1882.5px;top:-265px;width:2560px;height:1600px"><div class="a" style="left:1923px;top:337px;width:234px;height:77.5px;border-radius:39px;background:#2f3033;box-shadow:0 2px 6px rgba(0,0,0,.35)"></div><div class="a" style="left:1993px;top:329px;width:94px;height:94px;border-radius:50%;overflow:hidden;background:linear-gradient(#a9c8e6 0,#a9c8e6 9%,#6e7c8c 9%,#8a8f98 28%,#4a6078 36%,#5d7893 60%,#3e5670 100%)"><div class="a" style="left:4px;top:26px;width:30px;height:40px;border-radius:45%;background:#2a2626"></div><div class="a" style="left:10px;top:30px;width:16px;height:22px;border-radius:45%;background:#d0aa9a"></div><div class="a" style="left:2px;top:55px;width:34px;height:45px;border-radius:40% 40% 0 0;background:#eeeef4"></div><div class="a" style="left:30px;top:50px;width:8px;height:40px;background:#d65a2a;transform:rotate(-20deg)"></div><div class="a" style="left:0;top:0;width:94px;height:94px;background:rgba(20,22,26,.45)"></div><div class="a" style="left:0;top:0;width:94px;height:8px;background:#9cc0e4"></div></div><svg class="a" style="left:2024px;top:358px" width="34" height="36" viewBox="0 0 24 24" fill="#d8d8d8" opacity=".55"><path d="M19 11h-1.7c0 .74-.16 1.43-.43 2.05l1.23 1.23c.56-.98.9-2.09.9-3.28zm-4.02.17c0-.06.02-.11.02-.17V5c0-1.66-1.34-3-3-3S9 3.34 9 5v.18l5.98 5.99zM4.27 3L3 4.27l6.01 6.01V11c0 1.66 1.33 3 2.99 3 .22 0 .44-.03.65-.08l1.66 1.66c-.71.33-1.5.52-2.31.52-2.76 0-5.3-2.1-5.3-5.1H5c0 3.41 2.72 6.23 6 6.72V21h2v-3.28c.91-.13 1.77-.45 2.54-.9L19.73 21 21 19.73 4.27 3z"/></svg><svg class="a" style="left:1950px;top:360px" width="24" height="36"><path d="M2 0h19v3h-3v14l4 5v3h-8.5v11h-3V25H1v-3l4-5V3H2z" fill="#c4c4c4"/><rect x="8" y="3" width="7.5" height="16" fill="#2f3033"/></svg><div class="a" style="left:2114px;top:361px;width:8px;height:8px;border-radius:50%;background:#c4c4c4"></div><div class="a" style="left:2114px;top:372px;width:8px;height:8px;border-radius:50%;background:#c4c4c4"></div><div class="a" style="left:2114px;top:382.5px;width:8px;height:8px;border-radius:50%;background:#c4c4c4"></div><div class="a" style="left:1904px;top:429.5px;width:253.5px;height:42px;border-radius:21px;background:#fff"></div><svg class="a" style="left:1920px;top:437px" width="24" height="28" viewBox="0 0 24 28"><path d="M5.5 15V6.5a1.8 1.8 0 0 1 3.6 0V13M9.1 13V3.5a1.8 1.8 0 0 1 3.6 0V13M12.7 13V4.5a1.8 1.8 0 0 1 3.6 0V13M16.3 13V8a1.8 1.8 0 0 1 3.6 0v9.5a8.5 8.5 0 0 1-8.5 8.5h-.5a7 7 0 0 1-6-3.4L2.2 17.3a1.8 1.8 0 0 1 3-2L8 19" fill="none" stroke="#202124" stroke-width="2" stroke-linejoin="round" stroke-linecap="round"/></svg><div class="a" style="left:1958.4px;top:439.3px;font-size:22px;color:#202124;white-space:nowrap;letter-spacing:0.05px;line-height:1">Rezzan Gülsevinç</div><div class="a" style="left:2129.7px;top:286.3px;width:46px;height:46px;border-radius:50%;background:#323336"></div><svg class="a" style="left:2138.7px;top:295.3px" width="28" height="28" viewBox="0 0 24 24" fill="#fff"><path d="M19 11h-1.7c0 .74-.16 1.43-.43 2.05l1.23 1.23c.56-.98.9-2.09.9-3.28zm-4.02.17c0-.06.02-.11.02-.17V5c0-1.66-1.34-3-3-3S9 3.34 9 5v.18l5.98 5.99zM4.27 3L3 4.27l6.01 6.01V11c0 1.66 1.33 3 2.99 3 .22 0 .44-.03.65-.08l1.66 1.66c-.71.33-1.5.52-2.31.52-2.76 0-5.3-2.1-5.3-5.1H5c0 3.41 2.72 6.23 6 6.72V21h2v-3.28c.91-.13 1.77-.45 2.54-.9L19.73 21 21 19.73 4.27 3z"/></svg>
</div></div>
<div class="a" style="left:2218.5px;top:265px;width:313px;height:222px;background:#3c4043;border-radius:12px;overflow:hidden;"><div class="a" style="left:-2218.5px;top:-265px;width:2560px;height:1600px"><div class="a" style="left:2328px;top:329px;width:94px;height:94px;border-radius:50%;background:#f7f7f7"></div><svg class="a" style="left:2328px;top:329px" width="94" height="94"><path d="M57.5 9.5L10 75" stroke="#111" stroke-width="2.3"/><ellipse cx="57" cy="10.5" rx="1.6" ry="3.4" transform="rotate(35 57 10.5)" fill="none" stroke="#111" stroke-width="1.2"/><path d="M56 11C42 6 24 12 27 28C30 40 39 44 32 54C26 61 26 64 31 66M58 11C66 8 76 10 74 18" fill="none" stroke="#333" stroke-width=".9"/><path d="M30 66c-4-5-11-3-9 4c1 4 6 8 10 11c3-4 8-8 9-12c1-6-6-8-10-3" fill="none" stroke="#333" stroke-width=".9"/><text x="39" y="49" font-size="9" font-style="italic" fill="#222" font-family="Liberation Serif" letter-spacing="-.2">sengulce_design</text></svg><div class="a" style="left:2464px;top:286.3px;width:46px;height:46px;border-radius:50%;background:#323336"></div><svg class="a" style="left:2473px;top:295.3px" width="28" height="28" viewBox="0 0 24 24" fill="#fff"><path d="M19 11h-1.7c0 .74-.16 1.43-.43 2.05l1.23 1.23c.56-.98.9-2.09.9-3.28zm-4.02.17c0-.06.02-.11.02-.17V5c0-1.66-1.34-3-3-3S9 3.34 9 5v.18l5.98 5.99zM4.27 3L3 4.27l6.01 6.01V11c0 1.66 1.33 3 2.99 3 .22 0 .44-.03.65-.08l1.66 1.66c-.71.33-1.5.52-2.31.52-2.76 0-5.3-2.1-5.3-5.1H5c0 3.41 2.72 6.23 6 6.72V21h2v-3.28c.91-.13 1.77-.45 2.54-.9L19.73 21 21 19.73 4.27 3z"/></svg>
<div class="a nm2" style="left:2248px;top:439.5px;font-size:24px;letter-spacing:0.56px">Şengül Şahinoğlu U...</div>
</div></div>
<div class="a" style="left:1882.5px;top:508px;width:314.5px;height:222px;background:#3c4043;border-radius:12px;overflow:hidden;"><div class="a" style="left:-1882.5px;top:-508px;width:2560px;height:1600px"><div class="a" style="left:1971.6px;top:508px;width:137px;height:222px;overflow:hidden;background:linear-gradient(90deg,#a8a8a8,#cfcfcf 60%,#d9d9d9)"><div class="a" style="left:0;top:0;width:137px;height:222px;filter:blur(1px)"><div class="a" style="left:0;top:0;width:137px;height:222px;background:linear-gradient(#d4d4d4,#ececec);clip-path:polygon(0 18px,100% 44px,100% 60px,0 30px)"></div><div class="a" style="left:0;top:0;width:137px;height:222px;background:linear-gradient(180deg,#d9d2c6 0,#e2e0dc 25%,#e6e6e6 45%,#dcdcdc 100%);clip-path:polygon(0 28px,100% 59px,100% 100%,0 100%)"></div><div class="a" style="left:0;top:0;width:137px;height:222px;background:repeating-linear-gradient(93deg,rgba(255,255,255,0) 0,rgba(255,255,255,.45) 4px,rgba(150,150,150,.18) 9px);clip-path:polygon(0 28px,100% 59px,100% 100%,0 100%)"></div><div class="a" style="left:0;top:30px;width:40px;height:192px;background:linear-gradient(90deg,rgba(120,120,120,.35),rgba(120,120,120,0))"></div><div class="a" style="left:46px;top:133px;width:92px;height:120px;border-radius:48% 48% 25% 25%;background:#2f373d"></div><div class="a" style="left:57px;top:148px;width:72px;height:100px;border-radius:45%;background:#1d1b1b"></div><div class="a" style="left:63px;top:176px;width:60px;height:12px;border:2px solid #080808;border-radius:4px"></div></div></div><div class="a" style="left:2129.7px;top:529.4px;width:46px;height:46px;border-radius:50%;background:#323336"></div><svg class="a" style="left:2138.7px;top:538.4px" width="28" height="28" viewBox="0 0 24 24" fill="#fff"><path d="M19 11h-1.7c0 .74-.16 1.43-.43 2.05l1.23 1.23c.56-.98.9-2.09.9-3.28zm-4.02.17c0-.06.02-.11.02-.17V5c0-1.66-1.34-3-3-3S9 3.34 9 5v.18l5.98 5.99zM4.27 3L3 4.27l6.01 6.01V11c0 1.66 1.33 3 2.99 3 .22 0 .44-.03.65-.08l1.66 1.66c-.71.33-1.5.52-2.31.52-2.76 0-5.3-2.1-5.3-5.1H5c0 3.41 2.72 6.23 6 6.72V21h2v-3.28c.91-.13 1.77-.45 2.54-.9L19.73 21 21 19.73 4.27 3z"/></svg>
<div class="a nm2" style="left:1912.5px;top:683.4px;font-size:24px;letter-spacing:0.3px">Hülya</div>
</div></div>
<div class="a" style="left:2218.5px;top:508px;width:313px;height:222px;background:#3c4043;border-radius:12px;overflow:hidden;"><div class="a" style="left:-2218.5px;top:-508px;width:2560px;height:1600px"><div class="a" style="left:2328px;top:572.4px;width:94px;height:94px;border-radius:50%;background:#3b87d0"></div><div class="a" style="left:2328px;top:593.4px;width:94px;text-align:center;font-size:52px;line-height:1;color:#fff">Ş</div><div class="a" style="left:2464px;top:529.4px;width:46px;height:46px;border-radius:50%;background:#323336"></div><svg class="a" style="left:2473px;top:538.4px" width="28" height="28" viewBox="0 0 24 24" fill="#fff"><path d="M19 11h-1.7c0 .74-.16 1.43-.43 2.05l1.23 1.23c.56-.98.9-2.09.9-3.28zm-4.02.17c0-.06.02-.11.02-.17V5c0-1.66-1.34-3-3-3S9 3.34 9 5v.18l5.98 5.99zM4.27 3L3 4.27l6.01 6.01V11c0 1.66 1.33 3 2.99 3 .22 0 .44-.03.65-.08l1.66 1.66c-.71.33-1.5.52-2.31.52-2.76 0-5.3-2.1-5.3-5.1H5c0 3.41 2.72 6.23 6 6.72V21h2v-3.28c.91-.13 1.77-.45 2.54-.9L19.73 21 21 19.73 4.27 3z"/></svg>
<div class="a nm2" style="left:2248px;top:683.4px;font-size:24px;letter-spacing:0.9px">Şahide Omak</div>
</div></div>
<div class="a" style="left:1882.5px;top:752px;width:314.5px;height:222px;background:#3c4043;border-radius:12px;overflow:hidden;"><div class="a" style="left:-1882.5px;top:-752px;width:2560px;height:1600px"><div class="a" style="left:1968px;top:752px;width:142px;height:222px;overflow:hidden;background:linear-gradient(180deg,#c4c3c1,#cfcecb 60%,#c7c7c5)"><div class="a" style="left:0;top:0;width:142px;height:222px;filter:blur(1.5px)"><div class="a" style="left:0;top:0;width:142px;height:222px;background:linear-gradient(90deg,#8b7a66,#6f6152);clip-path:polygon(100% 28%,100% 64%,84% 62%,72% 42%,88% 26%)"></div><svg class="a" style="left:0;top:0" width="142" height="222"><path d="M142 4L99 92" stroke="#f0f0f0" stroke-width="4"/><path d="M142 60L124 70M142 100L120 95" stroke="#d8cfc2" stroke-width="2"/></svg><div class="a" style="left:0;top:100px;width:50px;height:4px;background:#e0e0e0"></div><div class="a" style="left:52px;top:92px;width:62px;height:120px;border-radius:45% 45% 30% 30%;background:#3c322d"></div><div class="a" style="left:64px;top:108px;width:38px;height:58px;border-radius:45%;background:#a98272"></div><div class="a" style="left:20px;top:168px;width:122px;height:70px;border-radius:40% 40% 0 0;background:#b38f7f"></div><div class="a" style="left:50px;top:178px;width:80px;height:60px;border-radius:30% 30% 0 0;background:#141414"></div></div></div><div class="a" style="left:2129.7px;top:773.2px;width:46px;height:46px;border-radius:50%;background:#323336"></div><svg class="a" style="left:2138.7px;top:782.2px" width="28" height="28" viewBox="0 0 24 24" fill="#fff"><path d="M19 11h-1.7c0 .74-.16 1.43-.43 2.05l1.23 1.23c.56-.98.9-2.09.9-3.28zm-4.02.17c0-.06.02-.11.02-.17V5c0-1.66-1.34-3-3-3S9 3.34 9 5v.18l5.98 5.99zM4.27 3L3 4.27l6.01 6.01V11c0 1.66 1.33 3 2.99 3 .22 0 .44-.03.65-.08l1.66 1.66c-.71.33-1.5.52-2.31.52-2.76 0-5.3-2.1-5.3-5.1H5c0 3.41 2.72 6.23 6 6.72V21h2v-3.28c.91-.13 1.77-.45 2.54-.9L19.73 21 21 19.73 4.27 3z"/></svg>
<div class="a nm2" style="left:1911.5px;top:925.3px;font-size:24px;letter-spacing:1.16px">azra Akgün</div>
</div></div>
<div class="a" style="left:2218.5px;top:752px;width:313px;height:222px;background:#3c4043;border-radius:12px;overflow:hidden;"><div class="a" style="left:-2218.5px;top:-752px;width:2560px;height:1600px"><div class="a" style="left:2307.7px;top:752px;width:137px;height:222px;overflow:hidden;background:#d2d3cb"><div class="a" style="left:0;top:0;width:137px;height:222px;filter:blur(1.5px)"><div class="a" style="left:0;top:128px;width:137px;height:100px;background:#c21f25;border-radius:20% 10% 0 0"></div><div class="a" style="left:48px;top:22px;width:88px;height:150px;border-radius:50% 50% 40% 40%;background:#c9bcbf"></div><div class="a" style="left:62px;top:45px;width:62px;height:92px;border-radius:46%;background:#d1a898"></div></div></div><div class="a" style="left:2464px;top:773.2px;width:46px;height:46px;border-radius:50%;background:#323336"></div><svg class="a" style="left:2473px;top:782.2px" width="28" height="28" viewBox="0 0 24 24" fill="#fff"><path d="M19 11h-1.7c0 .74-.16 1.43-.43 2.05l1.23 1.23c.56-.98.9-2.09.9-3.28zm-4.02.17c0-.06.02-.11.02-.17V5c0-1.66-1.34-3-3-3S9 3.34 9 5v.18l5.98 5.99zM4.27 3L3 4.27l6.01 6.01V11c0 1.66 1.33 3 2.99 3 .22 0 .44-.03.65-.08l1.66 1.66c-.71.33-1.5.52-2.31.52-2.76 0-5.3-2.1-5.3-5.1H5c0 3.41 2.72 6.23 6 6.72V21h2v-3.28c.91-.13 1.77-.45 2.54-.9L19.73 21 21 19.73 4.27 3z"/></svg>
<div class="a nm2" style="left:2248px;top:925.3px;font-size:24px;letter-spacing:1.3px">Meryem Çandır</div>
</div></div>
<div class="a" style="left:1882.5px;top:994px;width:314.5px;height:222px;background:#3c4043;border-radius:12px;overflow:hidden;"><div class="a" style="left:-1882.5px;top:-994px;width:2560px;height:1600px"><div class="a" style="left:1967.2px;top:994px;width:144px;height:222px;overflow:hidden;background:linear-gradient(180deg,#cfcfcf,#d9d9d9 50%,#d2d2d2)"><div class="a" style="left:0;top:0;width:144px;height:222px;filter:blur(1.5px)"><div class="a" style="left:-20px;top:10px;width:200px;height:5px;background:#ececec;transform:rotate(18deg)"></div><div class="a" style="left:-20px;top:45px;width:200px;height:6px;background:#e8e8e8;transform:rotate(18deg)"></div><div class="a" style="left:38px;top:82px;width:56px;height:140px;border-radius:45% 45% 20% 20%;background:#3a3029"></div><div class="a" style="left:52px;top:92px;width:36px;height:58px;border-radius:45%;background:#b38b7a"></div><div class="a" style="left:0;top:150px;width:125px;height:80px;border-radius:30% 30% 0 0;background:#6c6b47"></div><div class="a" style="left:105px;top:160px;width:40px;height:70px;background:#c79f8f;transform:rotate(-25deg)"></div><div class="a" style="left:48px;top:150px;width:20px;height:75px;background:#2e2620;border-radius:40%"></div></div></div><div class="a" style="left:2129.7px;top:1014.5px;width:46px;height:46px;border-radius:50%;background:#323336"></div><svg class="a" style="left:2138.7px;top:1023.5px" width="28" height="28" viewBox="0 0 24 24" fill="#fff"><path d="M19 11h-1.7c0 .74-.16 1.43-.43 2.05l1.23 1.23c.56-.98.9-2.09.9-3.28zm-4.02.17c0-.06.02-.11.02-.17V5c0-1.66-1.34-3-3-3S9 3.34 9 5v.18l5.98 5.99zM4.27 3L3 4.27l6.01 6.01V11c0 1.66 1.33 3 2.99 3 .22 0 .44-.03.65-.08l1.66 1.66c-.71.33-1.5.52-2.31.52-2.76 0-5.3-2.1-5.3-5.1H5c0 3.41 2.72 6.23 6 6.72V21h2v-3.28c.91-.13 1.77-.45 2.54-.9L19.73 21 21 19.73 4.27 3z"/></svg>
<div class="a nm2" style="left:1912px;top:1168.1px;font-size:24px;letter-spacing:0.55px">Neşe Ersöz</div>
</div></div>
<div class="a" style="left:2218.0px;top:993.5px;width:313.5px;height:222px;background:#3c4043;border-radius:12px;overflow:hidden;height:223px;background:#7ba2f2;border-radius:13px"><div class="a" style="left:-2218.0px;top:-993.5px;width:2560px;height:1600px"><div class="a" style="left:2225.5px;top:1001px;width:299px;height:208px;border-radius:7px;overflow:hidden;background:linear-gradient(90deg,#9fa8ab,#bcc3c4 40%,#c3c7c7 70%,#b4b8b8)"><div class="a" style="left:103px;top:44px;width:128px;height:112px;border-radius:48% 48% 40% 40%;background:#8e8f8f;filter:blur(2px)"></div><div class="a" style="left:116px;top:86px;width:104px;height:130px;border-radius:45%;background:#a69a97;filter:blur(1px)"></div><div class="a" style="left:116px;top:122px;width:48px;height:22px;border:3px solid #5d2a30;border-radius:40%"></div><div class="a" style="left:170px;top:122px;width:48px;height:22px;border:3px solid #5d2a30;border-radius:40%"></div><div class="a" style="left:148px;top:150px;width:42px;height:60px;border-radius:40%;background:#9c8883"></div></div><div class="a" style="left:2464.5px;top:1015px;width:46px;height:46px;border-radius:50%;background:#3d7ce0"></div><div class="a" style="left:2477px;top:1031px;width:6px;height:14px;border-radius:3px;background:#fff"></div><div class="a" style="left:2484.5px;top:1025px;width:6px;height:26px;border-radius:3px;background:#fff"></div><div class="a" style="left:2492px;top:1031px;width:6px;height:14px;border-radius:3px;background:#fff"></div><div class="a nm2" style="left:2248px;top:1168.1px;font-size:24px;letter-spacing:0.7px">Nevriye YILDIRIM</div>
</div></div>
<div class="a" style="left:1882.5px;top:1237px;width:314.5px;height:222px;background:#3c4043;border-radius:12px;overflow:hidden;"><div class="a" style="left:-1882.5px;top:-1237px;width:2560px;height:1600px"><div class="a" style="left:1983.5px;top:1289px;width:63.6px;height:63.6px;border-radius:50%;background:#7aa64a"></div><div class="a" style="left:2036px;top:1285.5px;width:70.6px;height:70.6px;border-radius:50%;background:#3c4043"></div><div class="a" style="left:2039.5px;top:1289px;width:63.6px;height:63.6px;border-radius:50%;background:#b44522"></div><div class="a" style="left:1983.5px;top:1304.7px;width:63.6px;text-align:center;font-size:34px;line-height:1;color:#fff">H</div><div class="a" style="left:2039.5px;top:1304.7px;width:63.6px;text-align:center;font-size:34px;line-height:1;color:#fff">A</div><div class="a nm2" style="left:1882.5px;width:314.5px;text-align:center;top:1380.5px;font-size:24px;letter-spacing:0.75px;text-shadow:none">3 kişi daha</div></div></div>
<div class="a" style="left:2218.5px;top:1237px;width:313px;height:222px;background:#3c4043;border-radius:12px;overflow:hidden;"><div class="a" style="left:-2218.5px;top:-1237px;width:2560px;height:1600px"><div class="a" style="left:2328px;top:1300.3px;width:94px;height:94px;border-radius:50%;background:#c52644"></div><div class="a" style="left:2328px;top:1330.3px;width:94px;text-align:center;font-size:32px;font-weight:bold;font-style:italic;line-height:1;color:#f6efe4;font-family:'Liberation Serif',serif;letter-spacing:-1px">Vika</div><div class="a" style="left:2464px;top:1258.6px;width:46px;height:46px;border-radius:50%;background:#323336"></div><svg class="a" style="left:2473px;top:1267.6px" width="28" height="28" viewBox="0 0 24 24" fill="#fff"><path d="M19 11h-1.7c0 .74-.16 1.43-.43 2.05l1.23 1.23c.56-.98.9-2.09.9-3.28zm-4.02.17c0-.06.02-.11.02-.17V5c0-1.66-1.34-3-3-3S9 3.34 9 5v.18l5.98 5.99zM4.27 3L3 4.27l6.01 6.01V11c0 1.66 1.33 3 2.99 3 .22 0 .44-.03.65-.08l1.66 1.66c-.71.33-1.5.52-2.31.52-2.76 0-5.3-2.1-5.3-5.1H5c0 3.41 2.72 6.23 6 6.72V21h2v-3.28c.91-.13 1.77-.45 2.54-.9L19.73 21 21 19.73 4.27 3z"/></svg>
<div class="a nm2" style="left:2247.6px;top:1410.2px;font-size:24px;letter-spacing:0.75px">Vizyoner Kadınlar D...</div>
</div></div>
<div class="a" style="left:43px;top:1514.4px;font-size:27.8px;line-height:1;color:#fff;white-space:nowrap;letter-spacing:-0.5px;-webkit-text-stroke:.4px #fff">11:42</div>
<div class="a" style="left:128px;top:1515px;width:2px;height:28px;background:#bdc1c6"></div>
<div class="a" style="left:151.5px;top:1514.2px;font-size:28px;line-height:1;color:#fff;white-space:nowrap;letter-spacing:0.8px;-webkit-text-stroke:.4px #fff">"Etkili İletişim" Eğitimi</div>
<div class="a" style="left:778.7px;top:1486px;width:156px;height:85.5px;border-radius:30px;background:#5c1a15"></div>
<div class="a" style="left:850px;top:1486px;width:85px;height:85.5px;border-radius:28px;background:#f3dfdd"></div>
<svg class="a" style="left:805px;top:1516px" width="30" height="24"><path d="M6.5 17.5l8-8 8 8" fill="none" stroke="#f3dfdd" stroke-width="2.4"/></svg>
<svg class="a" style="left:871px;top:1508px" width="41" height="41" viewBox="0 0 24 24" fill="#5c1a15"><path d="M19 11h-1.7c0 .74-.16 1.43-.43 2.05l1.23 1.23c.56-.98.9-2.09.9-3.28zm-4.02.17c0-.06.02-.11.02-.17V5c0-1.66-1.34-3-3-3S9 3.34 9 5v.18l5.98 5.99zM4.27 3L3 4.27l6.01 6.01V11c0 1.66 1.33 3 2.99 3 .22 0 .44-.03.65-.08l1.66 1.66c-.71.33-1.5.52-2.31.52-2.76 0-5.3-2.1-5.3-5.1H5c0 3.41 2.72 6.23 6 6.72V21h2v-3.28c.91-.13 1.77-.45 2.54-.9L19.73 21 21 19.73 4.27 3z"/></svg>
<div class="a" style="left:949.3px;top:1486px;width:156.5px;height:85.5px;border-radius:30px;background:#5c1a15"></div>
<div class="a" style="left:1020.6px;top:1486px;width:85.2px;height:85.5px;border-radius:28px;background:#e3d3d2"></div>
<svg class="a" style="left:976px;top:1516px" width="30" height="24"><path d="M6.5 17.5l8-8 8 8" fill="none" stroke="#f3dfdd" stroke-width="2.4"/></svg>
<svg class="a" style="left:1040px;top:1508px" width="46" height="46" viewBox="0 0 46 46"><g fill="none" stroke="#5c1a15" stroke-width="3.2" stroke-linejoin="round"><path d="M12 11h19v9.5l9.5-7.5v22l-9.5-7.5"/><path d="M7 11v23.5h23.5"/><path d="M6.5 5.5L41 40" stroke-width="3.6"/></g></svg>
<div class="a" style="left:1119.8px;top:1486px;width:99.7px;height:85.5px;border-radius:43px/43px;background:#333537"></div>
<div class="a" style="left:1233.7px;top:1486px;width:99.3px;height:85.5px;border-radius:43px/43px;background:#333537"></div>
<div class="a" style="left:1347.2px;top:1486px;width:99.8px;height:85.5px;border-radius:43px/43px;background:#333537"></div>
<div class="a" style="left:1461.3px;top:1486px;width:99.7px;height:85.5px;border-radius:43px/43px;background:#333537"></div>
<div class="a" style="left:1575px;top:1486px;width:63.7px;height:85.5px;border-radius:32px;background:#333537"></div>
<div class="a" style="left:1653.2px;top:1486px;width:128px;height:85.5px;border-radius:43px;background:#cc4438"></div>
<svg class="a" style="left:1149px;top:1508px" width="42" height="42" viewBox="0 0 24 24" fill="#e8eaed"><path d="M19 4H5c-1.11 0-2 .9-2 2v12c0 1.1.89 2 2 2h14c1.1 0 2-.9 2-2V6c0-1.1-.9-2-2-2zm0 14H5V6h14v12zM7 15h3c.55 0 1-.45 1-1v-1H9.5v.5h-2v-3h2v.5H11v-1c0-.55-.45-1-1-1H7c-.55 0-1 .45-1 1v4c0 .55.45 1 1 1zm7 0h3c.55 0 1-.45 1-1v-1h-1.5v.5h-2v-3h2v.5H18v-1c0-.55-.45-1-1-1h-3c-.55 0-1 .45-1 1v4c0 .55.45 1 1 1z"/></svg>
<svg class="a" style="left:1263px;top:1508px" width="41.5" height="41.5" viewBox="0 0 24 24" fill="#e8eaed"><path d="M11.99 2C6.47 2 2 6.48 2 12s4.47 10 9.99 10C17.52 22 22 17.52 22 12S17.52 2 11.99 2zM12 20c-4.42 0-8-3.58-8-8s3.58-8 8-8 8 3.58 8 8-3.58 8-8 8zm3.5-9c.83 0 1.5-.67 1.5-1.5S16.33 8 15.5 8 14 8.67 14 9.5s.67 1.5 1.5 1.5zm-7 0c.83 0 1.5-.67 1.5-1.5S9.33 8 8.5 8 7 8.67 7 9.5 7.67 11 8.5 11zm3.5 6.5c2.33 0 4.31-1.46 5.11-3.5H6.89c.8 2.04 2.78 3.5 5.11 3.5z"/></svg>
<svg class="a" style="left:1375.5px;top:1507px" width="43" height="43" viewBox="0 0 24 24" fill="#e8eaed"><path d="M21 3H3c-1.11 0-2 .89-2 2v14c0 1.11.89 2 2 2h18c1.11 0 2-.89 2-2V5c0-1.11-.89-2-2-2zm0 16.02H3V4.98h18v14.04zM10 12H8l4-4 4 4h-2v4h-4v-4z" transform="translate(1.4 1.6) scale(.9)"/></svg>
<svg class="a" style="left:1490px;top:1504px" width="42" height="50" viewBox="0 0 42 50"><g fill="#e8eaed"><rect x="11.6" y="8" width="7.6" height="20" rx="3.8"/><rect x="19.4" y="3.2" width="6.4" height="25" rx="3.2"/><rect x="26" y="5.3" width="5.6" height="23" rx="2.8"/><rect x="31.8" y="11.5" width="5.6" height="17" rx="2.8"/></g><path d="M19.3 6v22M25.9 6v22M31.7 9v19" stroke="#333537" stroke-width="1.2"/><path d="M11.8 28V31.5l-3.3-6.5a2.6 2.6 0 0 0-4.6 2.4l5.3 11.5a12.3 12.3 0 0 0 11.2 7.1h.6a13 13 0 0 0 13-13V24" fill="none" stroke="#e8eaed" stroke-width="3" stroke-linejoin="round"/></svg>
<div class="a" style="left:1603.3px;top:1514.3999999999999px;width:7.8px;height:7.8px;border-radius:50%;background:#e8eaed"></div>
<div class="a" style="left:1603.3px;top:1524.8px;width:7.8px;height:7.8px;border-radius:50%;background:#e8eaed"></div>
<div class="a" style="left:1603.3px;top:1535.3999999999999px;width:7.8px;height:7.8px;border-radius:50%;background:#e8eaed"></div>
<svg class="a" style="left:1693px;top:1515px" width="48" height="28" viewBox="0 0 48 28"><path d="M24 8.5c-6.5 0-13 2.5-18 7l5 5.5 6-3.6v-4.8c2.3-.6 4.6-.9 7-.9s4.7.3 7 .9v4.8l6 3.6 5-5.5c-5-4.5-11.5-7-18-7z" fill="none" stroke="#fff" stroke-width="3" stroke-linejoin="round"/></svg>
<svg class="a" style="left:2133.5px;top:1507.7px" width="42.5" height="42.5" viewBox="0 0 24 24" fill="#fff"><path d="M11 7h2v2h-2zm0 4h2v6h-2zm1-9C6.48 2 2 6.48 2 12s4.48 10 10 10 10-4.48 10-10S17.52 2 12 2zm0 18c-4.41 0-8-3.59-8-8s3.59-8 8-8 8 3.59 8 8-3.59 8-8 8z"/></svg>
<svg class="a" style="left:2218px;top:1513px" width="44" height="32" viewBox="0 0 44 32"><g fill="none" stroke="#fff" stroke-width="3.2"><circle cx="15.6" cy="9.4" r="4.6"/><path d="M3.6 28.4v-1.2c0-3.6 5.4-7.4 12-7.4s12 3.8 12 7.4v1.2z"/></g><path d="M27.5 3.2a6.2 6.2 0 0 1 0 12.4a9.5 9.5 0 0 0 0-12.4z" fill="#fff"/><path d="M30.5 17.8c5.8 1 11.3 4 11.3 8.2v4h-7.6v-3.2c0-3.6-1.6-6.7-3.7-9z" fill="#fff"/></svg>
<div class="a" style="left:2242px;top:1470px;width:45.8px;height:35.6px;border-radius:18px;background:#5f6368"></div>
<div class="a" style="left:2242px;width:45.8px;text-align:center;top:1478.6px;font-size:19px;line-height:1;color:#fff">13</div>
<svg class="a" style="left:2304px;top:1510px" width="42.5" height="42.5" viewBox="0 0 24 24" fill="#fff"><path d="M4 4h16v12H5.17L4 17.17V4m0-2c-1.1 0-1.99.9-1.99 2L2 22l4-4h14c1.1 0 2-.9 2-2V4c0-1.1-.9-2-2-2H4zm2 10h8v2H6v-2zm0-3h12v2H6V9zm0-3h12v2H6V6z" transform="translate(0 -.6)"/></svg>
<svg class="a" style="left:2390px;top:1508px" width="43" height="43" viewBox="0 0 24 24" fill="#fff"><path d="M12 2l-5.5 9h11L12 2zm0 3.84L13.93 9h-3.87L12 5.84zM17.5 13c-2.49 0-4.5 2.01-4.5 4.5s2.01 4.5 4.5 4.5 4.5-2.01 4.5-4.5-2.01-4.5-4.5-4.5zm0 7c-1.38 0-2.5-1.12-2.5-2.5s1.12-2.5 2.5-2.5 2.5 1.12 2.5 2.5-1.12 2.5-2.5 2.5zM3 21.5h8v-8H3v8zm2-6h4v4H5v-4z" transform="translate(0 -.5)"/></svg>
<svg class="a" style="left:2478px;top:1506px" width="42" height="46" viewBox="0 0 42 46"><g fill="none" stroke="#fff" stroke-width="3.4"><path d="M12.5 16V11a7.5 7.5 0 0 1 15 0v5"/><path d="M33 16.5H5.5v24h14"/></g><path d="M31.5 22.5v-6" stroke="#fff" stroke-width="3.4"/><circle cx="30" cy="35" r="8.6" fill="#fff"/><circle cx="30" cy="32" r="2.6" fill="#202124"/><path d="M24.5 40c1-2.5 3-3.5 5.5-3.5s4.5 1 5.5 3.5" stroke="#202124" stroke-width="2.4" fill="none"/></svg>
</body></html>
